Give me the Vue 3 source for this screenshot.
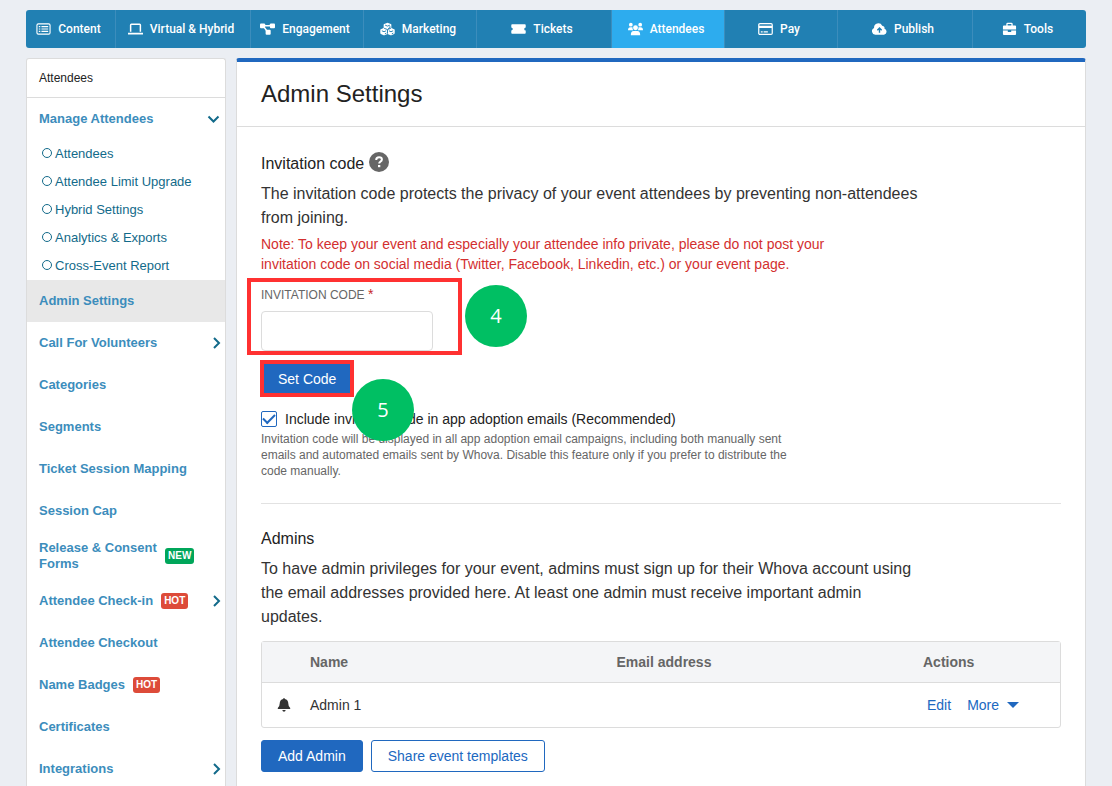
<script setup>
import { ref } from 'vue'

const tabs = [
  { label: 'Content', icon: 'list' },
  { label: 'Virtual & Hybrid', icon: 'laptop' },
  { label: 'Engagement', icon: 'nodes' },
  { label: 'Marketing', icon: 'cubes' },
  { label: 'Tickets', icon: 'ticket' },
  { label: 'Attendees', icon: 'people', active: true },
  { label: 'Pay', icon: 'card' },
  { label: 'Publish', icon: 'cloud' },
  { label: 'Tools', icon: 'case' },
]

const items = [
  {
    label: 'Manage Attendees',
    arrow: 'down',
    children: [
      'Attendees',
      'Attendee Limit Upgrade',
      'Hybrid Settings',
      'Analytics & Exports',
      'Cross-Event Report',
    ],
  },
  { label: 'Admin Settings', active: true },
  { label: 'Call For Volunteers', arrow: 'right' },
  { label: 'Categories' },
  { label: 'Segments' },
  { label: 'Ticket Session Mapping' },
  { label: 'Session Cap' },
  { label: 'Release & Consent Forms', badge: 'NEW' },
  { label: 'Attendee Check-in', badge: 'HOT', arrow: 'right' },
  { label: 'Attendee Checkout' },
  { label: 'Name Badges', badge: 'HOT' },
  { label: 'Certificates' },
  { label: 'Integrations', arrow: 'right' },
]

const admins = [{ name: 'Admin 1', email: '' }]
const code = ref('')
const include = ref(true)
</script>

<template>
  <div class="page">
    <nav class="topnav">
      <a v-for="t in tabs" :key="t.label" href="#" class="tab" :class="{ active: t.active }">
        <svg v-if="t.icon === 'list'" class="ico" viewBox="0 1 16 14" fill="none" stroke="currentColor">
          <rect x="1" y="2.5" width="14" height="11" rx="1.5" stroke-width="1.2" />
          <path d="M3 5.5h1.6M3 8h1.6M3 10.5h1.6M5.8 5.5H13M5.8 8H13M5.8 10.5H13" stroke-width="1.3" />
        </svg>
        <svg v-else-if="t.icon === 'laptop'" class="ico" viewBox="0 1 16 14" fill="none" stroke="currentColor">
          <path d="M2.8 11V3.8q0-.8.8-.8h8.8q.8 0 .8.8V11" stroke-width="1.6" />
          <path d="M0 13h16" stroke-width="1.8" />
        </svg>
        <svg v-else-if="t.icon === 'nodes'" class="ico" viewBox="0 1 16 14" fill="currentColor">
          <rect x="0" y="2" width="5.4" height="5.2" rx="1" />
          <rect x="10.6" y="2" width="5.4" height="5.2" rx="1" />
          <rect x="6" y="8.800" width="5.400" height="5.200" rx="1" />
          <path d="M4 4.600h8M4 5.500l3.600 5" stroke="currentColor" stroke-width="1.700" />
        </svg>
        <svg v-else-if="t.icon === 'cubes'" class="ico" viewBox="0 1 16 14">
          <path
            fill="currentColor"
            d="M8 1.200l3.500 1.400q.6.300.6.900v3.400l3 1.300q.6.300.6.900v3.200q0 .6-.6.900l-2.900 1.400q-.5.200-1 0L8 13.200l-3.200 1.400q-.5.200-1 0L.9 13.200q-.6-.3-.6-.9V9.100q0-.6.6-.9l3-1.300V3.500q0-.6.6-.9z"
          />
          <path
            class="cut"
            d="M5.500 3.900L8 4.900l2.500-1M8.600 7.600l2-.9V5M8 8.600v4.400M2 9.900l2.300 1 2.200-1M5.200 13.200l1.600-.8M9.500 9.900l2.200 1 2.300-1M12.600 13.200l1.600-.8M4.400 7.200L8 8.600l3.600-1.400"
          />
        </svg>
        <svg v-else-if="t.icon === 'ticket'" class="ico" viewBox="0 1 16 14" fill="currentColor">
          <path d="M1.200 3h13.600q.9 0 .9.900v2.500a1.600 1.600 0 0 0 0 3.200v2.500q0 .9-.9.900H1.200q-.9 0-.9-.9V9.600a1.600 1.600 0 0 0 0-3.200V3.900q0-.9.900-.9z" />
        </svg>
        <svg v-else-if="t.icon === 'people'" class="ico" viewBox="0 1 16 14" fill="currentColor">
          <circle cx="3" cy="3.400" r="2" />
          <circle cx="13" cy="3.400" r="2" />
          <circle cx="8" cy="6.700" r="2.600" />
          <path d="M0 9.200q0-3.200 2.500-3.200h1.700q.3 0 .6.200Q4.600 8 5.500 9.200zM16 9.200q0-3.200-2.500-3.200h-1.700q-.3 0-.6.200.2 1.800-.7 3zM3 14.600q0-4.400 3-4.400h4q3 0 3 4.400z" />
        </svg>
        <svg v-else-if="t.icon === 'card'" class="ico" viewBox="0 1 16 14" fill="none" stroke="currentColor">
          <rect x=".8" y="2.300" width="14.400" height="11.400" rx="1.300" stroke-width="1.300" />
          <path d="M1 5.800h14" stroke-width="2.400" />
          <path d="M3 11h2M6 11h4.500" stroke-width="1.200" />
        </svg>
        <svg v-else-if="t.icon === 'cloud'" class="ico" viewBox="0 1 16 14">
          <path
            fill="currentColor"
            d="M3.800 14A3.700 3.700 0 0 1 2.200 6.900 4.600 4.600 0 0 1 10.900 4.500a2.700 2.700 0 0 1 2.400 3.300A3.200 3.200 0 0 1 12.800 14z"
          />
          <path class="cut arrow" d="M8 12V7.200M5.700 9.300L8 7 10.300 9.300" />
        </svg>
        <svg v-else class="ico" viewBox="0 1 16 14" fill="currentColor">
          <path d="M5.300 5V2.600q0-.7.700-.7h4q.7 0 .7.700V5" fill="none" stroke="currentColor" stroke-width="1.400" />
          <path d="M2 4.200h12q1 0 1 1v3.400H1V5.200q0-1 1-1zM1 9.600h5.200v1.500h3.600V9.600H15v3.700q0 1-1 1H2q-1 0-1-1z" />
        </svg>
        <span>{{ t.label }}</span>
      </a>
    </nav>

    <div class="columns">
      <aside class="sidebar">
        <div class="side-head">Attendees</div>
        <ul class="side-list">
          <li v-for="i in items" :key="i.label">
            <a href="#" class="item" :class="{ active: i.active }">
              <span class="item-label" :class="{ narrow: i.badge }">{{ i.label }}</span>
              <span v-if="i.badge" class="badge" :class="i.badge.toLowerCase()">{{ i.badge }}</span>
              <svg v-if="i.arrow" class="chev" viewBox="0 0 14 12">
                <path v-if="i.arrow === 'down'" d="M1.500 3.500L6.500 8.500l5-5" />
                <path v-else d="M7 1l5 5-5 5" />
              </svg>
            </a>
            <ul v-if="i.children" class="sub-list">
              <li v-for="c in i.children" :key="c">
                <a href="#" class="sub"><span class="ring"></span>{{ c }}</a>
              </li>
            </ul>
          </li>
        </ul>
      </aside>

      <main class="panel">
        <header class="panel-head"><h1>Admin Settings</h1></header>
        <div class="panel-body">
          <section>
            <h2>
              Invitation code
              <svg class="help" viewBox="0 0 20 20" role="img" aria-label="Help">
                <circle cx="10" cy="10" r="10" fill="#666" />
                <path d="M7.200 8q0-2.700 2.900-2.700 2.800 0 2.800 2.300 0 1.300-1.400 2-1.300.7-1.300 1.900" fill="none" stroke="#fff" stroke-width="2" />
                <rect x="9" y="13" width="2.300" height="2.200" fill="#fff" />
              </svg>
            </h2>
            <p class="lead">
              The invitation code protects the privacy of your event attendees by preventing non-attendees
              from joining.
            </p>
            <p class="note">
              Note: To keep your event and especially your attendee info private, please do not post your
              invitation code on social media (Twitter, Facebook, Linkedin, etc.) or your event page.
            </p>
            <div class="field">
              <label for="code">INVITATION CODE <span class="req">*</span></label>
              <input id="code" v-model="code" type="text" />
              <span class="frame"></span>
              <span class="step">4</span>
            </div>
            <div class="set">
              <button type="button" class="btn primary marked">Set Code</button>
              <span class="step">5</span>
            </div>
            <div class="check">
              <input id="include" v-model="include" type="checkbox" />
              <label for="include">Include invitation code in app adoption emails (Recommended)</label>
            </div>
            <p class="hint">
              Invitation code will be displayed in all app adoption email campaigns, including both manually
              sent emails and automated emails sent by Whova. Disable this feature only if you prefer to
              distribute the code manually.
            </p>
          </section>

          <hr />

          <section>
            <h2>Admins</h2>
            <p class="lead">
              To have admin privileges for your event, admins must sign up for their Whova account using the
              email addresses provided here. At least one admin must receive important admin updates.
            </p>
            <table>
              <thead>
                <tr>
                  <th class="c-bell"></th>
                  <th>Name</th>
                  <th>Email address</th>
                  <th class="c-act">Actions</th>
                </tr>
              </thead>
              <tbody>
                <tr v-for="a in admins" :key="a.name">
                  <td class="c-bell">
                    <svg class="bell" viewBox="0 0 14 14" fill="#333">
                      <path d="M7 0q.8 0 .8.900Q11.300 1.700 11.300 5.500q0 3 1.900 4.500v1H.8v-1q1.900-1.500 1.900-4.500 0-3.800 3.500-4.600Q6.200 0 7 0zM5.300 12h3.400q-.3 1.800-1.700 1.800T5.300 12z" />
                    </svg>
                  </td>
                  <td>{{ a.name }}</td>
                  <td>{{ a.email }}</td>
                  <td class="c-act">
                    <div class="actions">
                      <a href="#">Edit</a>
                      <button type="button" class="more">More <span class="caret"></span></button>
                    </div>
                  </td>
                </tr>
              </tbody>
            </table>
            <div class="buttons">
              <button type="button" class="btn primary">Add Admin</button>
              <button type="button" class="btn outline">Share event templates</button>
            </div>
          </section>
        </div>
      </main>
    </div>
  </div>
</template>

<style>
body {
  background: #ebeef3;
}
</style>

<style scoped>
* {
  box-sizing: border-box;
}
.page {
  min-height: 100vh;
  padding: 10px 26px 0;
  display: flex;
  flex-direction: column;
  gap: 10px;
  font-family: 'Liberation Sans', Arial, sans-serif;
  font-size: 14px;
  color: #333;
}
a {
  text-decoration: none;
}
h1,
h2,
p,
ul {
  margin: 0;
  padding: 0;
  list-style: none;
  font-weight: 400;
}
button,
input {
  font: inherit;
}
.topnav {
  display: grid;
  grid-template-columns: 89fr 135fr 113fr 113fr 135fr 113fr 113fr 135fr 114fr;
  height: 38px;
  border-radius: 3px;
  overflow: hidden;
  background: #2180b3;
}
.tab {
  display: flex;
  align-items: center;
  justify-content: center;
  gap: 7px;
  padding-right: 4px;
  font: 500 12px Roboto, sans-serif;
  color: #fff;
  white-space: nowrap;
}
.tab + .tab {
  border-left: 1px solid #3c8dbc;
}
.tab.active {
  background: #2dacee;
}
.ico {
  width: 15px;
  height: 14px;
  flex: none;
}
.cut {
  fill: none;
  stroke: #2180b3;
  stroke-width: 1;
}
.arrow {
  stroke-width: 1.5;
}
.columns {
  flex: 1;
  display: grid;
  grid-template-columns: 200px 1fr;
  gap: 10px;
}
.sidebar {
  background: #fff;
  border: 1px solid #dcdcdc;
  border-bottom: 0;
  border-radius: 3px 3px 0 0;
}
.side-head {
  height: 39px;
  padding: 0 12px;
  line-height: 38px;
  font-size: 12px;
  color: #222;
  border-bottom: 1px solid #dcdcdc;
}
.item {
  display: flex;
  align-items: center;
  min-height: 42px;
  padding: 8px 4px 8px 12px;
  font-size: 13px;
  font-weight: 700;
  line-height: 16px;
  color: #3c8dbc;
}
.item.active {
  background: #e8e8e8;
}
.narrow {
  max-width: 118px;
}
.badge {
  margin-left: 8px;
  padding: 0 3px;
  border-radius: 3px;
  font-size: 10px;
  line-height: 16px;
  color: #fff;
}
.new {
  background: #00a65a;
}
.hot {
  background: #dd4b39;
}
.chev {
  width: 14px;
  height: 12px;
  margin-left: auto;
  fill: none;
  stroke: #126a8a;
  stroke-width: 2;
}
.sub {
  display: flex;
  align-items: center;
  gap: 3px;
  height: 28px;
  padding: 0 0 2px 15px;
  font-size: 13px;
  color: #126a8a;
}
.ring {
  width: 10px;
  height: 10px;
  border: 1px solid #126a8a;
  border-radius: 50%;
}
.panel {
  min-width: 0;
  background: #fff;
  border: 1px solid #dcdcdc;
  border-top: 4px solid #2068bf;
  border-bottom: 0;
  border-radius: 3px 3px 0 0;
}
.panel-head {
  height: 65px;
  padding: 0 24px;
  border-bottom: 1px solid #dcdcdc;
}
h1 {
  font-size: 24px;
  line-height: 64px;
  color: #222;
}
.panel-body {
  padding: 25px 24px 14px;
}
h2 {
  display: flex;
  align-items: center;
  gap: 5px;
  height: 24px;
  margin-bottom: 6px;
  font-size: 16px;
  color: #222;
}
.help {
  width: 20px;
  height: 20px;
  margin-bottom: 4px;
}
.lead {
  max-width: 660px;
  font-size: 16px;
  line-height: 24px;
}
.note {
  max-width: 600px;
  margin-top: 4px;
  line-height: 20px;
  color: #d32f2f;
}
.field {
  position: relative;
  width: 172px;
  margin-top: 12px;
}
.field label {
  display: block;
  font-size: 12px;
  line-height: 16px;
  color: #666;
}
.req {
  color: #c62828;
  font-size: 14px;
}
.field input {
  display: block;
  width: 100%;
  height: 40px;
  margin-top: 8px;
  padding: 0 12px;
  border: 1px solid #dcdcdc;
  border-radius: 4px;
  background: #fff;
}
.frame {
  position: absolute;
  top: -8px;
  left: -14px;
  width: 215px;
  height: 77px;
  border: 4px solid #ff3131;
  pointer-events: none;
}
.step {
  position: absolute;
  width: 62px;
  height: 62px;
  border-radius: 50%;
  background: #00bf63;
  color: #fff;
  font: 20px/62px 'Open Sans', sans-serif;
  text-align: center;
}
.field .step {
  top: -1px;
  left: 204px;
}
.set {
  position: relative;
  display: flex;
  margin: 9px 0 0 -1px;
}
.set .step {
  top: 19px;
  left: 92px;
}
.btn {
  height: 32px;
  padding: 0 16px;
  border: 1px solid #2068bf;
  border-radius: 3px;
  font-size: 14px;
  white-space: nowrap;
}
.primary {
  background: #2068bf;
  color: #fff;
}
.outline {
  background: #fff;
  color: #2068bf;
}
.btn.marked {
  height: 37px;
  padding: 0 14px;
  border: 4px solid #ff3131;
  border-radius: 0;
}
.check {
  display: flex;
  align-items: center;
  gap: 8px;
  height: 24px;
  margin-top: 10px;
  color: #222;
}
.check input {
  appearance: none;
  width: 16px;
  height: 16px;
  margin: 0;
  border: 1px solid #2068bf;
  border-radius: 2px;
  display: grid;
  place-items: center;
}
.check input:checked::after {
  content: '';
  width: 10px;
  height: 5px;
  margin-bottom: 3px;
  border: solid #2068bf;
  border-width: 0 0 2px 2px;
  transform: rotate(-45deg);
}
.hint {
  max-width: 540px;
  font-size: 12px;
  line-height: 16px;
  color: #666;
}
hr {
  margin: 24px 0 23px;
  border: 0;
  border-top: 1px solid #e2e2e2;
}
table {
  width: 100%;
  margin-top: 12px;
  border: 1px solid #dcdcdc;
  border-radius: 3px;
  border-spacing: 0;
  table-layout: fixed;
}
th {
  height: 41px;
  padding: 0;
  background: #f4f5f7;
  border-bottom: 1px solid #dcdcdc;
  color: #666;
  text-align: left;
}
td {
  height: 44px;
  padding: 0;
}
.c-bell {
  width: 48px;
}
td.c-bell {
  padding-left: 15px;
}
.c-act {
  width: 137px;
}
.bell {
  display: block;
  width: 14px;
  height: 14px;
}
.actions {
  display: flex;
  gap: 16px;
  padding-left: 4px;
}
.actions a,
.more {
  color: #2068bf;
}
.more {
  display: flex;
  align-items: center;
  gap: 8px;
  padding: 0;
  border: 0;
  background: none;
}
.caret {
  border: 6px solid transparent;
  border-top: 6px solid #2068bf;
  border-bottom: 0;
}
.buttons {
  display: flex;
  gap: 8px;
  margin-top: 12px;
}
</style>
